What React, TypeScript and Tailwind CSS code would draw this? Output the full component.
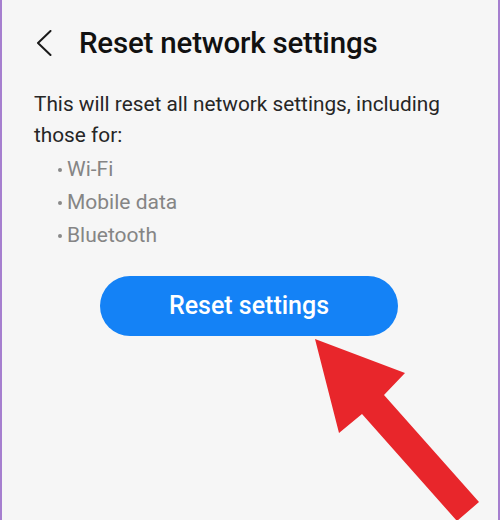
const items = ['Wi-Fi', 'Mobile data', 'Bluetooth'];

// Big red pointer arrow drawn over the page
function PointerArrow() {
  return (
    <svg
      className="absolute left-0 top-0 pointer-events-none"
      width={500}
      height={520}
      viewBox="0 0 500 520"
    >
      <polygon
        points="313,339 403,373 382,395 477,502 455,521 360,414 337,433"
        fill="#e8262b"
      />
    </svg>
  );
}

function BackIcon() {
  return (
    <svg width={16} height={26} viewBox="0 0 16 26" className="text-[#1a1a1a]">
      <polyline
        points="14.5,1 2,13 14.5,25"
        fill="none"
        stroke="currentColor"
        strokeWidth={2}
        strokeLinecap="round"
        strokeLinejoin="round"
      />
    </svg>
  );
}

export default function App() {
  return (
    <div
      className="relative w-[500px] h-[520px] overflow-hidden bg-[#f6f6f6] border-l-2 border-r-2 border-[#a67fcf]"
      style={{ fontFamily: 'Roboto, "Noto Sans", sans-serif' }}
    >
      {/* Header */}
      <div className="flex items-center pt-[26px] pl-[34px]">
        <BackIcon />
        <h1 className="ml-[27px] text-[29.5px] font-medium text-[#111] tracking-[-0.2px] leading-[34px]">
          Reset network settings
        </h1>
      </div>

      {/* Description */}
      <p className="mt-[29px] pl-[32px] pr-[20px] text-[20.8px] leading-[30.5px] text-[#262626]">
        This will reset all network settings, including those for:
      </p>

      <ul className="mt-[3px] pl-[56px]">
        {items.map((item) => (
          <li key={item} className="flex items-center text-[21px] leading-[33px] text-[#858585]">
            <span className="w-[4px] h-[4px] rounded-full bg-[#8a8a8a] mr-[5px]" />
            {item}
          </li>
        ))}
      </ul>

      {/* Action */}
      <div className="flex justify-center mt-[24px] pr-[2px]">
        <button className="w-[298px] h-[60px] rounded-full bg-[#1482f6] text-white text-[25px] font-medium">
          Reset settings
        </button>
      </div>

      <PointerArrow />
    </div>
  );
}
